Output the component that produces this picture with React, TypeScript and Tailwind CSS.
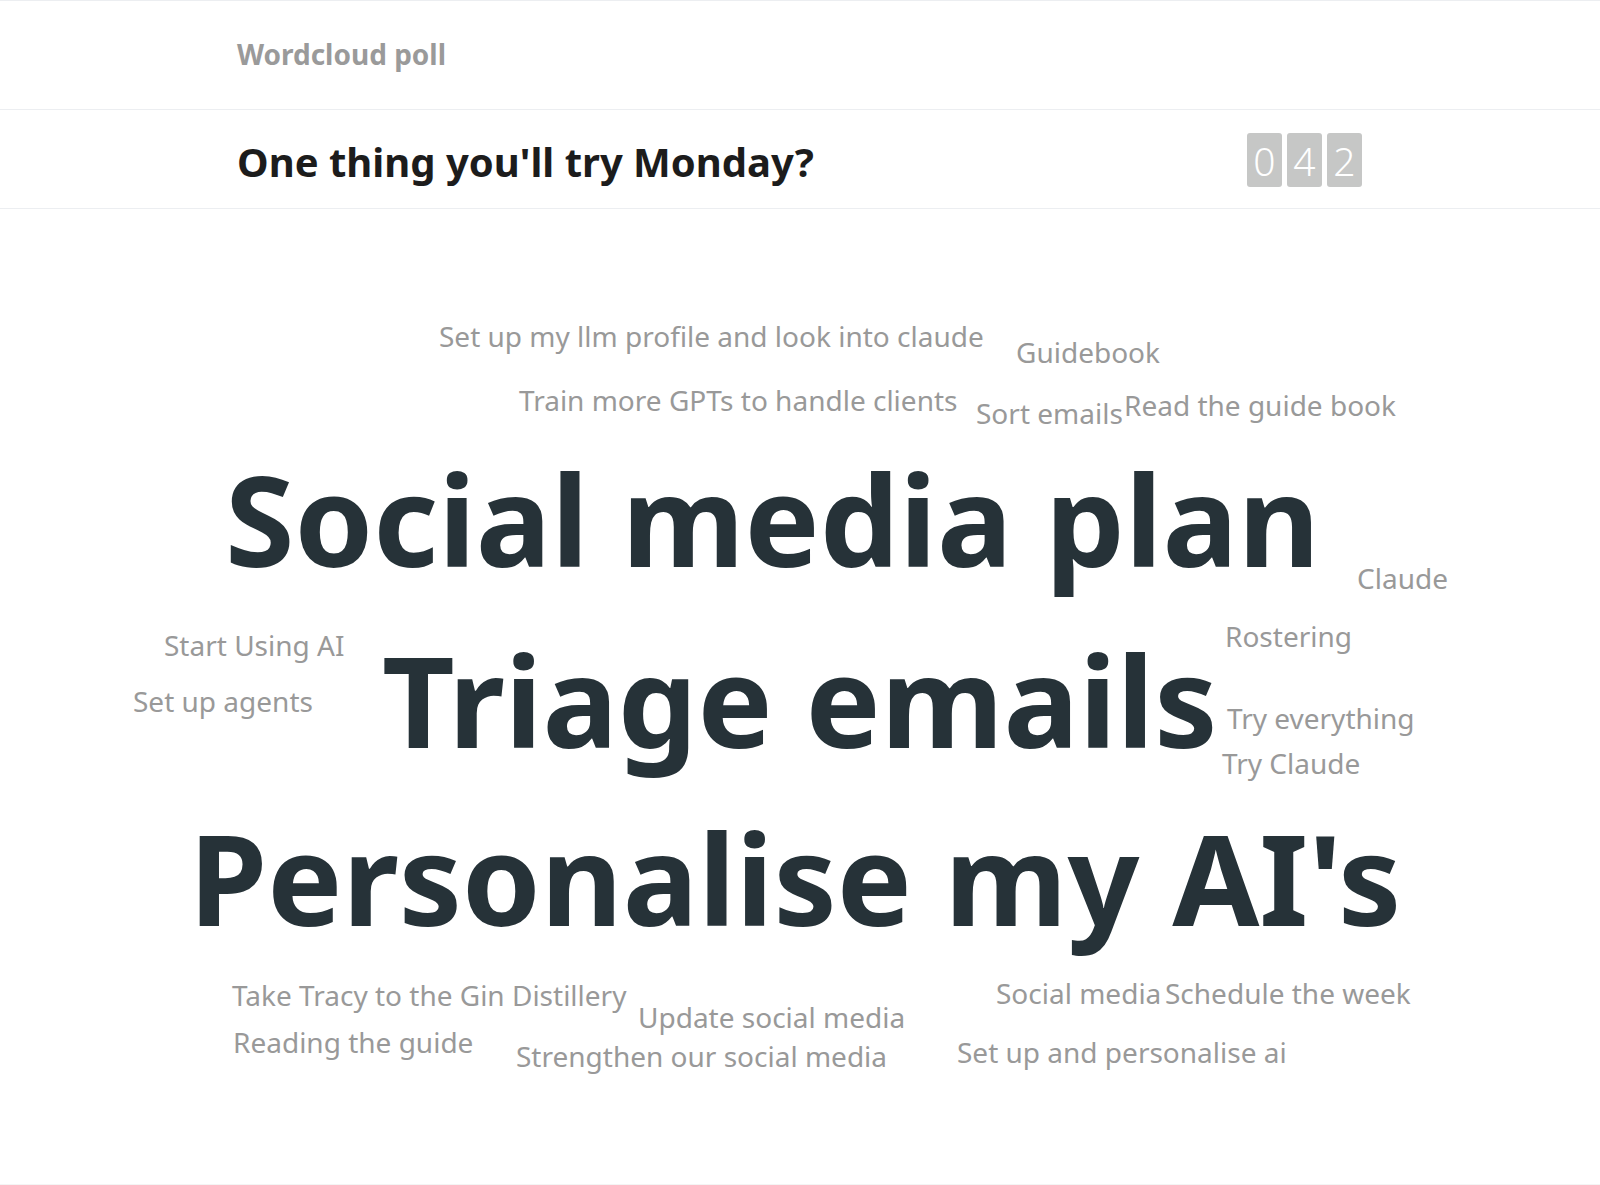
type Word = {
  text: string;
  left: number;
  top: number;
  big?: boolean;
};

// positions on the cloud canvas (canvas starts under the question bar)
const words: Word[] = [
  { text: 'Set up my llm profile and look into claude', left: 439, top: 113 },
  { text: 'Guidebook', left: 1016, top: 129 },
  { text: 'Train more GPTs to handle clients', left: 519, top: 177 },
  { text: 'Sort emails', left: 976, top: 190 },
  { text: 'Read the guide book', left: 1124, top: 182 },
  { text: 'Social media plan', left: 225, top: 246, big: true },
  { text: 'Claude', left: 1357, top: 355 },
  { text: 'Start Using AI', left: 164, top: 422 },
  { text: 'Rostering', left: 1225, top: 413 },
  { text: 'Triage emails', left: 382, top: 427, big: true },
  { text: 'Set up agents', left: 133, top: 478 },
  { text: 'Try everything', left: 1227, top: 495 },
  { text: 'Try Claude', left: 1222, top: 540 },
  { text: "Personalise my AI's", left: 189, top: 605, big: true },
  { text: 'Take Tracy to the Gin Distillery', left: 232, top: 772 },
  { text: 'Update social media', left: 638, top: 794 },
  { text: 'Reading the guide', left: 233, top: 819 },
  { text: 'Strengthen our social media', left: 516, top: 833 },
  { text: 'Social media', left: 996, top: 770 },
  { text: 'Schedule the week', left: 1165, top: 770 },
  { text: 'Set up and personalise ai', left: 957, top: 829 },
];

function Counter({ value }: { value: string }) {
  return (
    <div className="flex gap-[5px] pt-[2px]">
      {value.split('').map((d, i) => (
        <div
          key={i}
          className="flex h-[54px] w-[35px] items-center justify-center rounded-[3px] bg-[#c6c7c6] text-[39px] font-light leading-none text-white"
        >
          {d}
        </div>
      ))}
    </div>
  );
}

export default function App() {
  return (
    <div
      className="flex h-[1185px] w-[1600px] flex-col overflow-hidden bg-white"
      style={{ fontFamily: '"Noto Sans", "Open Sans", sans-serif' }}
    >
      {/* Poll type label */}
      <header className="flex h-[110px] shrink-0 items-center border-b border-t border-[#eceef1] px-[237px]">
        <h2 className="pb-[2px] text-[28px] font-bold leading-none text-[#9a9a9a]">Wordcloud poll</h2>
      </header>

      {/* Question + response count */}
      <div className="flex h-[99px] shrink-0 items-center justify-between border-b border-[#eceef1] pl-[237px] pr-[238px]">
        <h1 className="pt-[5px] text-[40px] font-bold leading-none text-[#1c1c1c]">
          One thing you'll try Monday?
        </h1>
        <Counter value="042" />
      </div>

      {/* Word cloud */}
      <div className="relative flex-1 border-b border-[#f4f4f4]">
        {words.map((w) => (
          <span
            key={w.text}
            className={
              w.big
                ? 'absolute whitespace-nowrap text-[126px] font-bold leading-none text-[#263238]'
                : 'absolute whitespace-nowrap text-[28px] leading-none text-[#999999]'
            }
            style={{ left: w.left, top: w.top }}
          >
            {w.text}
          </span>
        ))}
      </div>
    </div>
  );
}
